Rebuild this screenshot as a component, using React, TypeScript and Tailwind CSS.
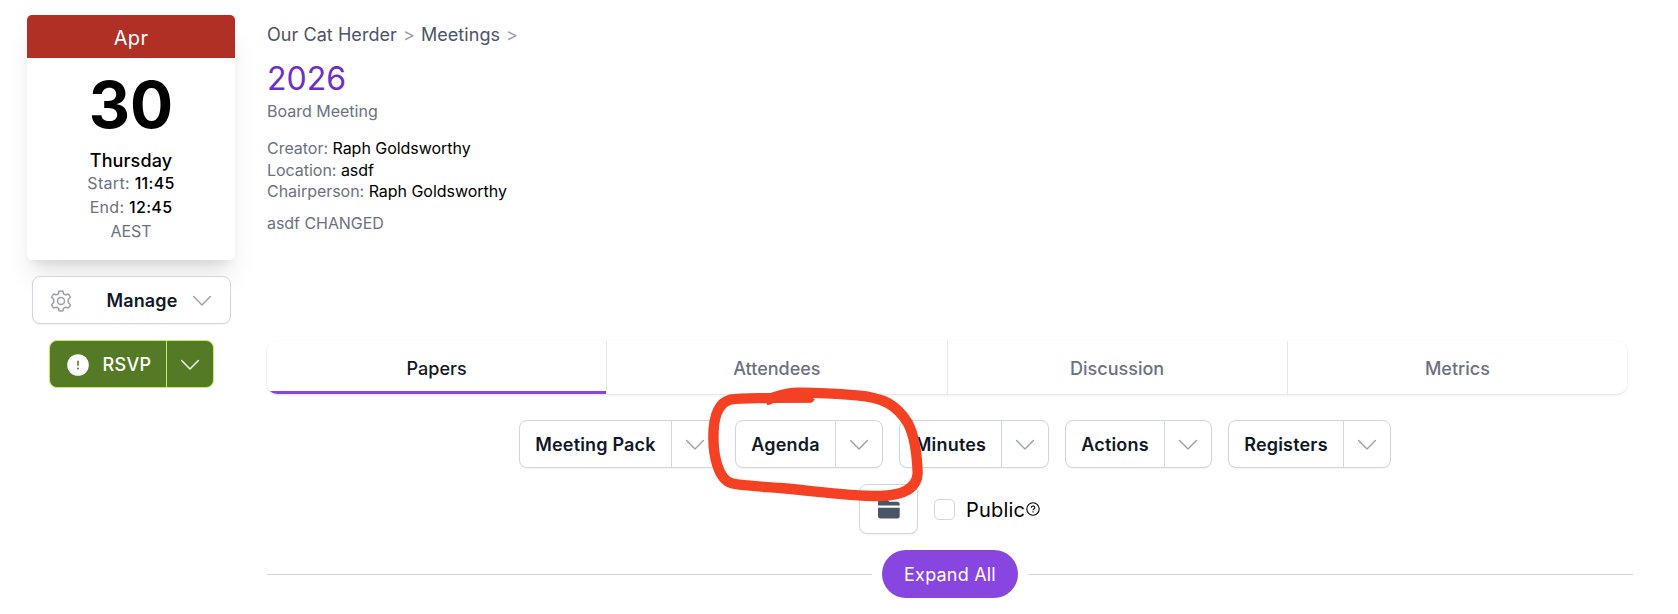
import React from "react";

function Chevron({ className }: { className: string }) {
  return (
    <svg viewBox="0 0 20 12" className={`h-3 w-5 ${className}`} fill="none" stroke="currentColor" strokeWidth="1.4" strokeLinecap="round" strokeLinejoin="round">
      <path d="M1.600 1.600 10 10l8.400-8.400" />
    </svg>
  );
}

function Gear() {
  return (
    <svg viewBox="0 0 22 22" className="size-[22px] shrink-0 text-gray-400" fill="none" stroke="currentColor" strokeWidth="1.5" strokeLinejoin="round">
      <path d="M9 1.200Q11 .6 13 1.200L13.500 3.600Q14.600 4.700 16 4.700L18.200 4Q19.800 5.400 20.400 7.300L18.500 9.200Q17.900 11 18.500 12.800L20.400 14.700Q19.800 16.600 18.200 18L16 17.300Q14.600 17.300 13.500 18.400L13 20.800Q11 21.400 9 20.800L8.500 18.400Q7.400 17.300 6 17.300L3.800 18Q2.200 16.600 1.600 14.700L3.500 12.800Q4.100 11 3.500 9.200L1.600 7.300Q2.200 5.400 3.800 4L6 4.700Q7.400 4.700 8.500 3.600Z" />
      <circle cx="11" cy="11" r="3.500" />
    </svg>
  );
}

function SplitButton({ label, left, right }: { label: string; left: string; right: string }) {
  return (
    <div className="flex h-12 rounded-lg border border-gray-300 bg-white shadow-xs">
      <button className={`flex items-center justify-center border-r border-gray-300 pt-px text-[18px] font-semibold tracking-[0.18px] whitespace-nowrap text-gray-900 ${left}`}>{label}</button>
      <button className={`flex items-center justify-center pt-px pr-px ${right}`}>
        <Chevron className="text-gray-400" />
      </button>
    </div>
  );
}

function DateCard() {
  return (
    <div className="h-[245px] w-[208px] overflow-hidden rounded-[5px] bg-white text-center shadow-xl">
      <div className="flex h-[43px] items-center justify-center bg-[#b03026] pt-0.5 text-[20px] tracking-[0.3px] text-white">Apr</div>
      <div className="mt-[15px] text-[64px] leading-[64px] font-bold text-black">30</div>
      <div className="mt-[12px] text-[18px] leading-6 font-medium tracking-[0.1px] text-black">Thursday</div>
      <div className="-mt-[2px] text-[16px] leading-6 tracking-[0.3px] text-gray-500">
        <div>Start: <span className="font-medium text-black">11:45</span></div>
        <div>End: <span className="font-medium text-black">12:45</span></div>
        <div className="tracking-normal">AEST</div>
      </div>
    </div>
  );
}

function Detail({ name, value }: { name: string; value: string }) {
  return <div>{name}: <span className="text-black">{value}</span></div>;
}

const tabs = ["Papers", "Attendees", "Discussion", "Metrics"];

export default function App() {
  return (
    <div className="relative flex h-[614px] w-[1678px] overflow-hidden bg-white font-[Inter,sans-serif]">
      <aside className="ml-[27px] flex w-[208px] flex-col items-center pt-[15px]">
        <DateCard />
        <button className="mt-4 flex h-12 w-[199px] items-center rounded-lg border border-gray-300 bg-white pt-px pl-[17px] text-[18px] font-semibold text-gray-900 shadow-xs">
          <Gear />
          <span className="ml-[35px] w-[71px] text-center tracking-[0.1px]">Manage</span>
          <Chevron className="ml-[14px] text-gray-400" />
        </button>
        <div className="mt-4 flex h-12 w-[165px] rounded-lg border border-[#bef264] bg-[#557a26] text-[18px] text-white">
          <button className="flex w-[117px] items-center border-r border-[#bef264] pt-px pl-[17px] font-medium">
            <svg viewBox="0 0 22 22" className="size-[22px]">
              <circle cx="11" cy="11" r="10.800" fill="white" />
              <path d="M11 6.800v5" stroke="#557a26" strokeWidth="1.600" />
              <circle cx="11" cy="14.600" r="1" fill="#557a26" />
            </svg>
            <span className="ml-[14px] tracking-[0.3px]">RSVP</span>
          </button>
          <button className="flex flex-1 items-center justify-center pt-px">
            <Chevron className="text-white" />
          </button>
        </div>
      </aside>

      <main className="ml-8 flex w-[1366px] flex-col">
        <header className="h-[341px] shrink-0 text-gray-500">
          <nav className="mt-[21px] flex gap-[6px] text-[18px] leading-7 tracking-[0.06px] text-gray-600">
            <a>Our Cat Herder</a>
            <span className="text-gray-400">&gt;</span>
            <a>Meetings</a>
            <span className="text-gray-400">&gt;</span>
          </nav>
          <h1 className="mt-[10px] text-[32px] leading-10 text-[#6d2fc9]">2026</h1>
          <div className="text-[16px] leading-6">Board Meeting</div>
          <div className="mt-[15px] text-[16px] leading-[21.500px] tracking-[-0.03px]">
            <Detail name="Creator" value="Raph Goldsworthy" />
            <Detail name="Location" value="asdf" />
            <Detail name="Chairperson" value="Raph Goldsworthy" />
          </div>
          <p className="mt-[8px] text-[16px] leading-6 tracking-[-0.05px]">asdf CHANGED</p>
        </header>

        <nav className="flex h-[53px] w-[1360px] shrink-0 overflow-hidden rounded-[10px] bg-white text-[18px] font-medium shadow">
          {tabs.map((tab, i) => (
            <a key={tab} className={`flex flex-1 items-center justify-center border-gray-200 pt-px ${i > 0 ? "border-l" : ""} ${i === 0 ? "text-gray-900 shadow-[inset_0_-3px_0_#8845e0]" : "text-gray-500"}`}>
              {tab}
            </a>
          ))}
        </nav>

        <div className="mt-[26px] ml-[252px] flex gap-4">
          <SplitButton label="Meeting Pack" left="w-[152px]" right="w-[46px]" />
          <SplitButton label="Agenda" left="w-[100px]" right="w-[46px]" />
          <SplitButton label="Minutes" left="w-[102px]" right="w-[46px]" />
          <SplitButton label="Actions" left="w-[99px]" right="w-[46px]" />
          <SplitButton label="Registers" left="w-[115px]" right="w-[46px]" />
        </div>

        <div className="mt-4 ml-[592px] flex h-[50px] items-center">
          <button className="flex h-[50px] w-[59px] items-center justify-center rounded-lg border border-gray-300 bg-white shadow-xs">
            <svg viewBox="0 0 22 20" className="h-5 w-[22px] text-gray-600" fill="currentColor">
              <path d="M0 6.500V3a2.500 2.500 0 0 1 2.500-2.500h5.700c.7 0 1.200.2 1.700.7l1.600 1.600h7.700a2.500 2.500 0 0 1 2.500 2.500v1.200z" />
              <path d="M0 8.800h21.700V17a2.500 2.500 0 0 1-2.500 2.500H2.500A2.500 2.500 0 0 1 0 17z" />
            </svg>
          </button>
          <span className="ml-4 size-[21px] rounded-[5px] border border-gray-300 bg-white" />
          <span className="ml-[11px] pt-0.5 text-[20px] tracking-[0.2px] text-black">Public</span>
          <svg viewBox="0 0 14 14" className="ml-px size-[14px]" fill="none" stroke="black" strokeWidth="1.100">
            <circle cx="7" cy="7" r="6.200" />
            <path d="M5.200 5.700a1.800 1.600 0 1 1 2.600 1.400Q7 7.500 7 8.300M7 9.300v1.100" />
          </svg>
        </div>

        <div className="mt-4 flex items-center">
          <div className="h-px w-[605px] bg-gray-300" />
          <button className="mx-[10px] h-12 w-[136px] rounded-full bg-[#8845e0] text-[18px] tracking-[0.2px] text-white">Expand All</button>
          <div className="h-px flex-1 bg-gray-300" />
        </div>
      </main>

      <svg className="pointer-events-none absolute top-[370px] left-[680px] h-[150px] w-[260px]" viewBox="0 0 780 450" fill="none" stroke="#f54123" strokeWidth="31" strokeLinejoin="round">
        <path d="M256 91C290 78 325 68 350 68C410 67 470 71 530 76C610 82 650 105 683 158C705 198 711 250 713 310C711 350 680 376 600 378C500 379 400 362 300 354C250 350 190 348 155 340C112 328 100 250 100 202C100 150 110 100 150 89C190 82 240 86 300 83L394 82" />
        <path d="M262 96L280 88L392 88L396 82" strokeWidth="20" />
      </svg>
    </div>
  );
}
